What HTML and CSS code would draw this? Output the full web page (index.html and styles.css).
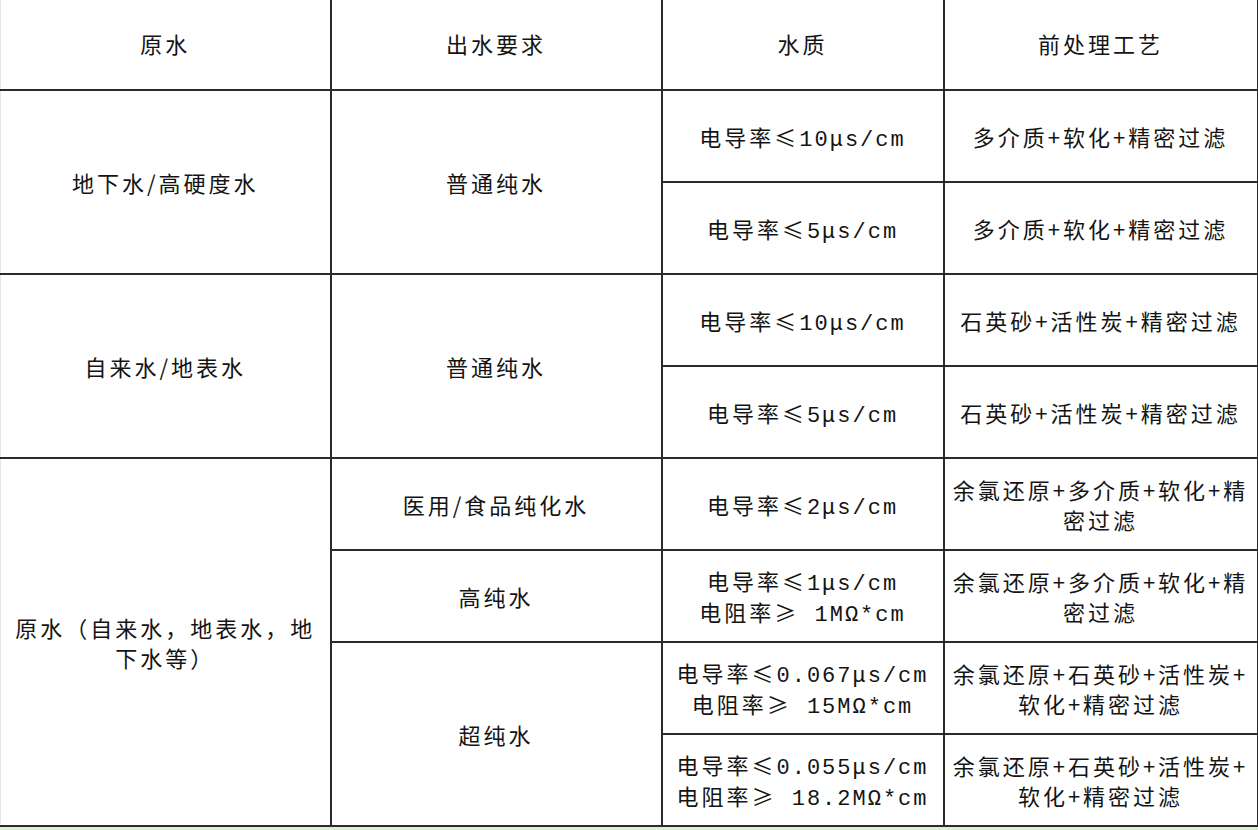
FILE: index.html
```html
<!DOCTYPE html>
<html lang="zh-CN">
<head>
<meta charset="utf-8">
<title>水处理工艺</title>
<link rel="stylesheet" href="styles.css">
</head>
<body>
<table class="spec">
  <colgroup>
    <col class="c1"><col class="c2"><col class="c3"><col class="c4">
  </colgroup>
  <thead>
    <tr class="head">
      <th>原水</th><th>出水要求</th><th>水质</th><th>前处理工艺</th>
    </tr>
  </thead>
  <tbody>
    <tr>
      <td rowspan="2">地下水/高硬度水</td>
      <td rowspan="2">普通纯水</td>
      <td class="q">电导率≤<span class="m">10μs/cm</span></td>
      <td>多介质+软化+精密过滤</td>
    </tr>
    <tr>
      <td class="q">电导率≤<span class="m">5μs/cm</span></td>
      <td>多介质+软化+精密过滤</td>
    </tr>
    <tr>
      <td rowspan="2">自来水/地表水</td>
      <td rowspan="2">普通纯水</td>
      <td class="q">电导率≤<span class="m">10μs/cm</span></td>
      <td>石英砂+活性炭+精密过滤</td>
    </tr>
    <tr>
      <td class="q">电导率≤<span class="m">5μs/cm</span></td>
      <td>石英砂+活性炭+精密过滤</td>
    </tr>
    <tr>
      <td rowspan="4">原水（自来水，地表水，地<br>下水等）</td>
      <td>医用/食品纯化水</td>
      <td class="q">电导率≤<span class="m">2μs/cm</span></td>
      <td>余氯还原+多介质+软化+精<br>密过滤</td>
    </tr>
    <tr>
      <td>高纯水</td>
      <td class="q">电导率≤<span class="m">1μs/cm</span><br>电阻率≥<span class="m"> 1MΩ*cm</span></td>
      <td>余氯还原+多介质+软化+精<br>密过滤</td>
    </tr>
    <tr>
      <td rowspan="2">超纯水</td>
      <td class="q">电导率≤<span class="m">0.067μs/cm</span><br>电阻率≥<span class="m"> 15MΩ*cm</span></td>
      <td>余氯还原+石英砂+活性炭+<br>软化+精密过滤</td>
    </tr>
    <tr>
      <td class="q">电导率≤<span class="m">0.055μs/cm</span><br>电阻率≥<span class="m"> 18.2MΩ*cm</span></td>
      <td>余氯还原+石英砂+活性炭+<br>软化+精密过滤</td>
    </tr>
  </tbody>
</table>
<div class="strip"></div>
</body>
</html>
```
FILE: styles.css
```css
html, body {
  margin: 0;
  padding: 0;
  background: #ffffff;
}

body {
  font-family: "Noto Sans CJK SC", "Noto Sans", sans-serif;
  color: #141414;
}

.spec {
  border-collapse: collapse;
  table-layout: fixed;
  width: 1257px;
}

.c1 { width: 330px; }
.c2 { width: 331px; }
.c3 { width: 282px; }
.c4 { width: 314px; }

.spec th,
.spec td {
  border: 2px solid #2a2a2a;
  padding: 0 4px;
  text-align: center;
  vertical-align: middle;
  font-size: 22px;
  font-weight: 400;
  letter-spacing: 3px;
  line-height: 30px;
  box-sizing: border-box;
}

.spec tr.head th {
  border-top: none;
  height: 90px;
  padding-bottom: 4px;
}

.spec tbody td {
  height: 92px;
}

.spec tr > :first-child {
  border-left: 1px solid #e4e8ee;
}

.spec tbody tr:nth-child(1) > td:first-child,
.spec tbody tr:nth-child(3) > td:first-child,
.spec tbody tr:nth-child(5) > td:first-child {
  border-left: 1px solid #e4e8ee;
}

.q {
  letter-spacing: 2px;
}

.m {
  font-family: "Liberation Mono", "DejaVu Sans Mono", "Noto Sans CJK SC", monospace;
  letter-spacing: 2px;
  line-height: 1;
}

.strip {
  height: 4px;
  background: #dcefd6;
}
```
